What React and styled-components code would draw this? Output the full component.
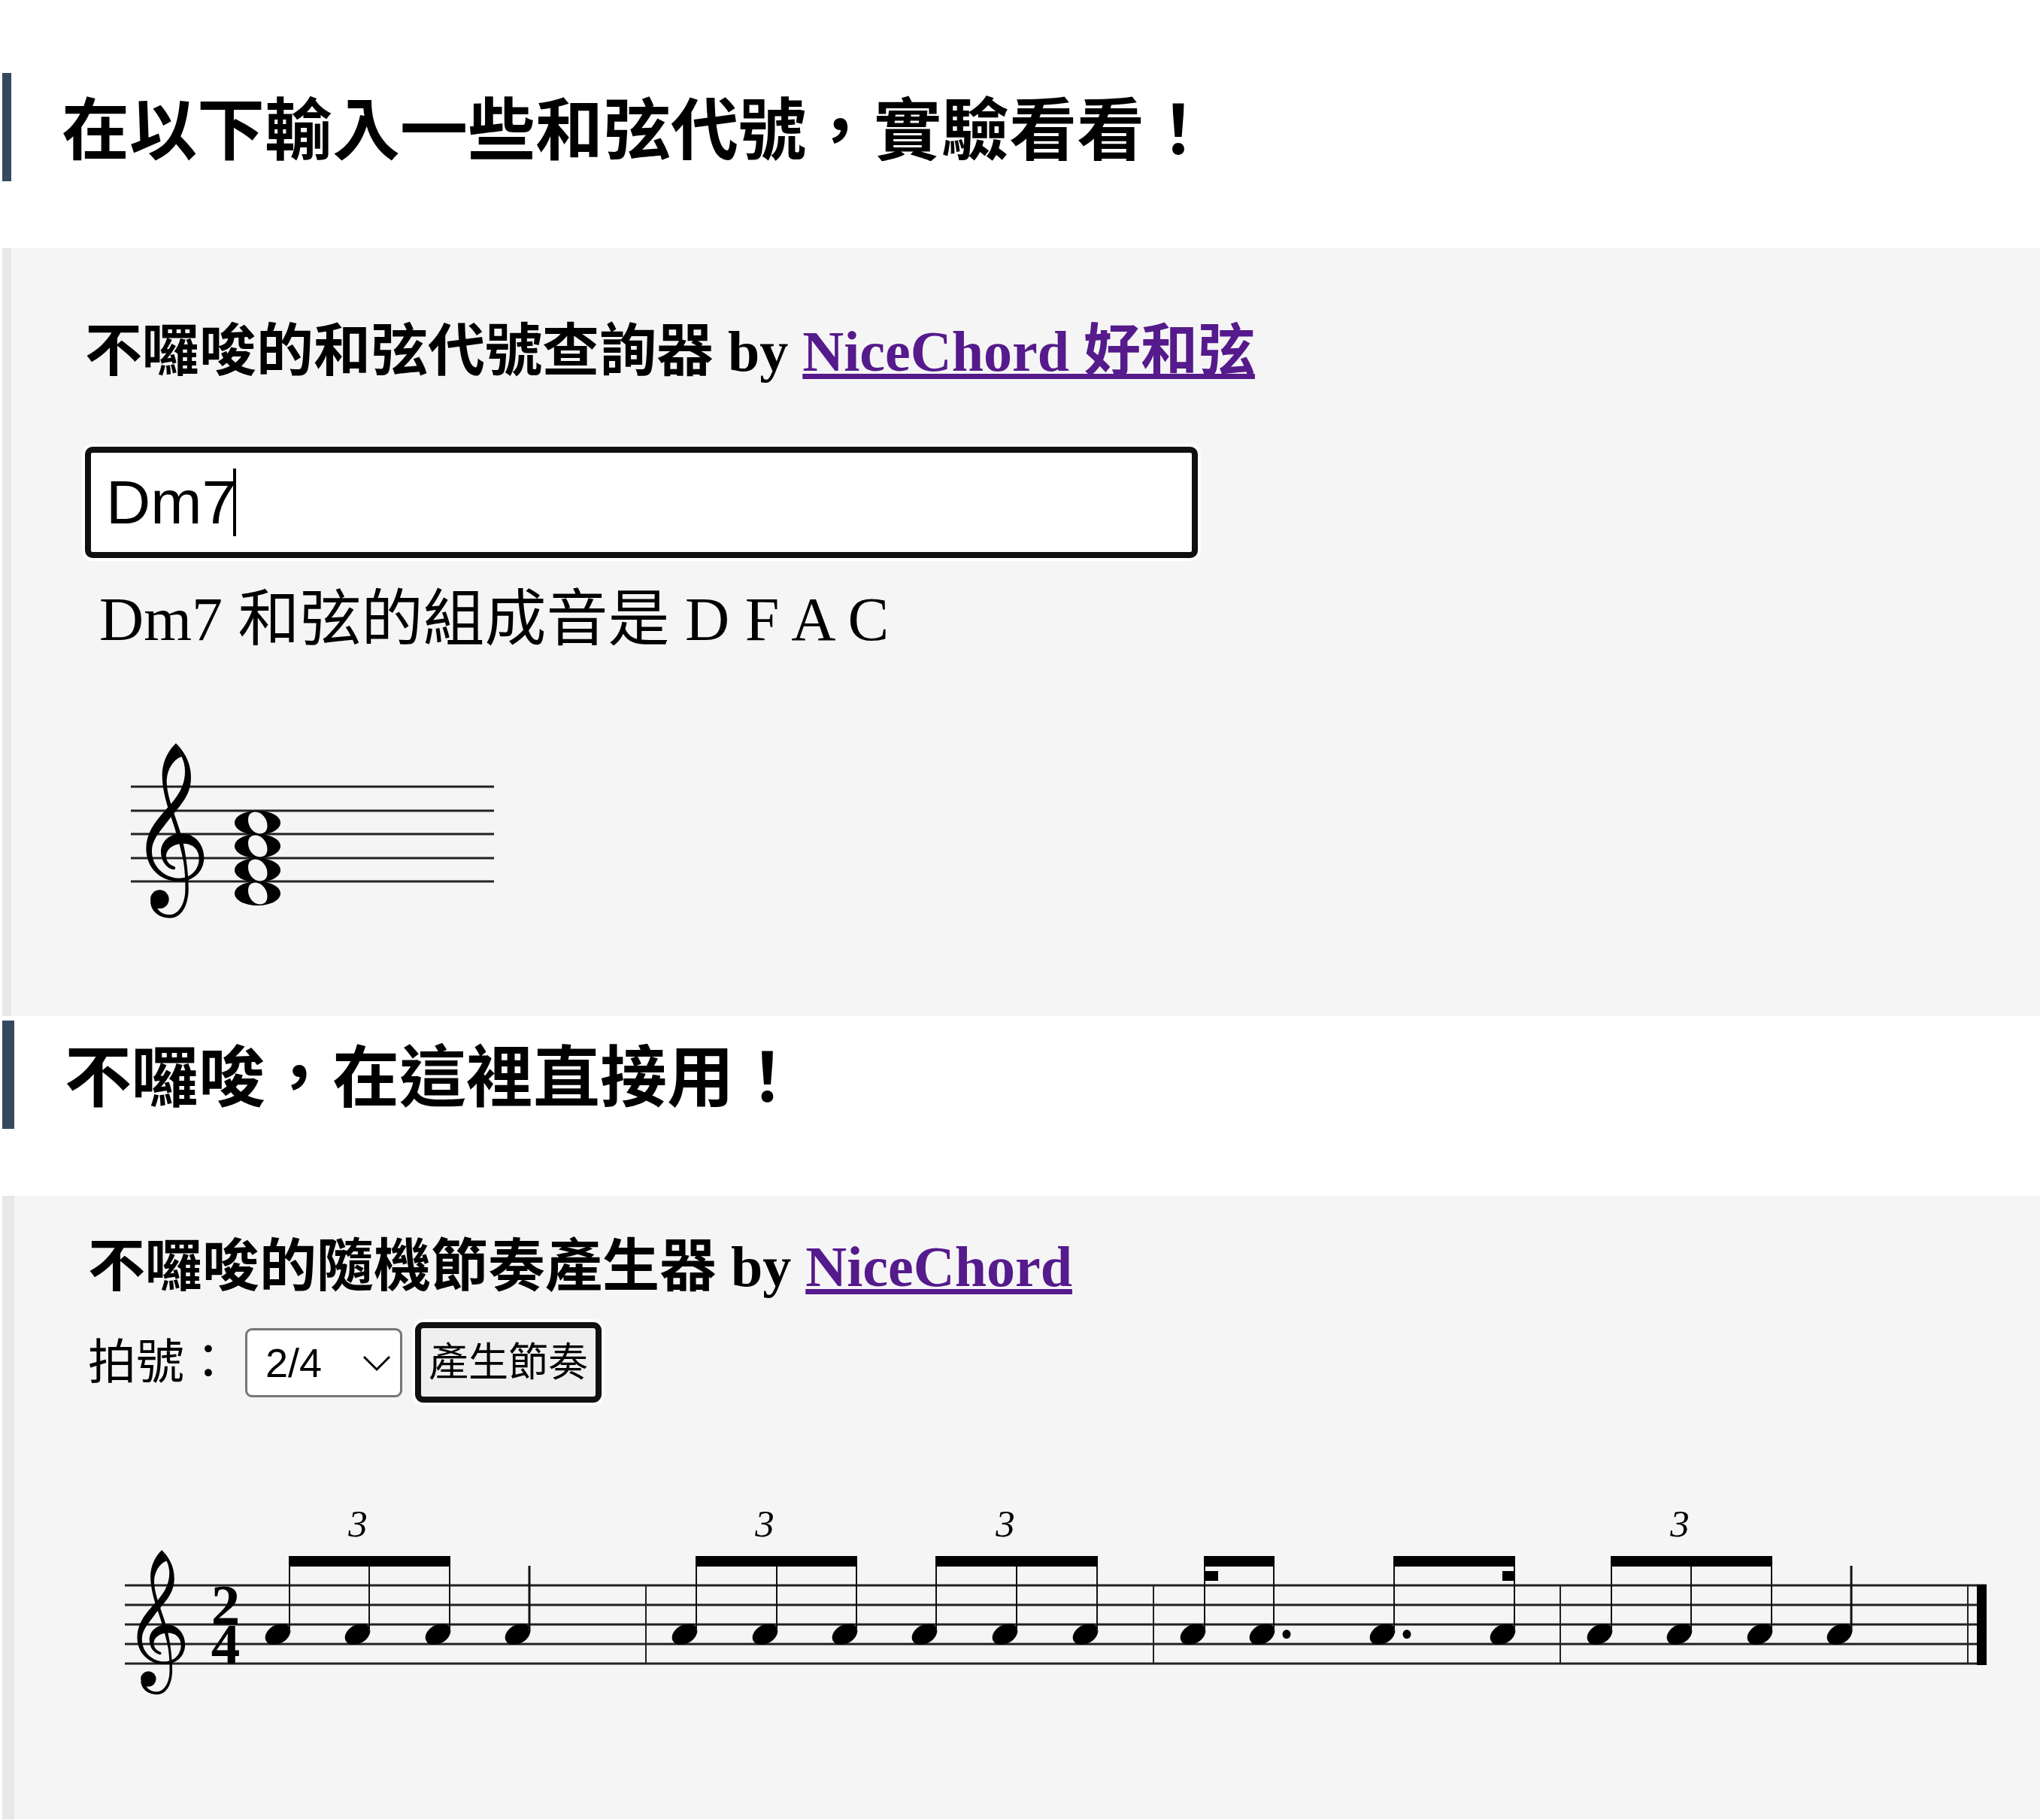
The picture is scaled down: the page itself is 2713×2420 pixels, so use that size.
import React, { useState } from "react";
import styled, { createGlobalStyle } from "styled-components";

const SERIF = `"Liberation Serif", "Noto Sans CJK TC", serif`;
const SANS = `"Liberation Sans", "Noto Sans CJK TC", sans-serif`;

const GlobalStyle = createGlobalStyle`
  *, *::before, *::after { box-sizing: border-box; }
  body {
    margin: 0;
    background: #fff;
    color: #000;
    font-family: ${SERIF};
  }
`;

const Page = styled.main`
  display: flex;
  flex-direction: column;
  gap: 6px;
  padding: 97px 0 0 3px;
`;

const Section = styled.section`
  display: flex;
  flex-direction: column;
  gap: 89px;
`;

const SectionTitle = styled.h2`
  margin: 0;
  padding: 0 0 6px 67px;
  border-left: ${(p) => p.$bar}px solid #34495e;
  font: 700 ${(p) => p.$size}px/138px "Noto Sans CJK TC", sans-serif;
`;

const Panel = styled.div`
  display: flex;
  flex-direction: column;
  align-items: flex-start;
  padding: ${(p) => p.$top}px 0 0 98px;
  border-left: ${(p) => p.$bar}px solid #e8e8e8;
  background: #f5f5f5;
`;

const ToolTitle = styled.h3`
  margin: 0;
  font: 700 76px/100px ${SERIF};
`;

const Link = styled.a`
  color: #551a8b;
  text-decoration: underline;
`;

const InputWrap = styled.div`
  position: relative;
  width: 1480px;
  max-width: 100%;
  margin-top: 77px;
`;

const ChordInput = styled.input`
  display: block;
  width: 100%;
  height: 148px;
  padding: 0 20px;
  border: 8px solid #101010;
  border-radius: 10px;
  outline: none;
  box-shadow: 0 0 0 4px #fff;
  background: #fff;
  color: #000;
  caret-color: transparent;
  font: 400 82px/94px ${SANS};
`;

const Caret = styled.span`
  position: absolute;
  top: 29px;
  left: 197px;
  width: 4px;
  height: 90px;
  background: #000;
`;

const Result = styled.p`
  margin: 32px 0 0 19px;
  font: 400 82px/100px ${SERIF};
`;

const Controls = styled.div`
  display: flex;
  align-items: center;
  gap: 17px;
  margin-top: 24px;
`;

const Label = styled.label`
  font: 400 64px/107px ${SERIF};
`;

const SelectWrap = styled.div`
  position: relative;
`;

const Select = styled.select`
  display: block;
  appearance: none;
  width: 209px;
  height: 92px;
  padding: 0 24px;
  border: 3px solid #767676;
  border-radius: 9px;
  background: #fff;
  color: #000;
  font: 400 54px/60px ${SANS};
`;

const Chevron = styled.svg`
  position: absolute;
  right: 14px;
  top: 36px;
  width: 40px;
  height: 22px;
  pointer-events: none;
`;

const Button = styled.button`
  height: 107px;
  padding: 0 10px;
  border: 8px solid #101010;
  border-radius: 11px;
  box-shadow: 0 0 0 4px #fff;
  background: #efefef;
  color: #000;
  font: 400 53px/80px ${SANS};
`;

const Score = styled.svg`
  display: block;
  width: ${(p) => p.$width}px;
  max-width: 100%;
  height: auto;
`;

function TrebleClef({ x, y, scale }) {
  return (
    <g transform={`translate(${x} ${y}) scale(${scale})`}>
      <path d="M252 58 C285 92 312 135 312 195 C312 240 294 275 270 305 C247 335 230 354 212 378 C180 420 154 450 156 492 C158 550 205 594 262 596 C312 598 344 560 344 518 C344 482 318 458 282 458 C240 458 213 482 213 508 C213 532 228 543 246 550 C252 554 250 562 242 562 C212 556 192 525 192 492 C192 448 228 418 276 418 C328 418 364 462 364 514 C364 570 322 609 262 609 C190 609 133 556 133 478 C133 420 166 374 198 338 C232 298 288 250 288 170 C288 148 282 125 274 111 Z" />
      <path d="M252 58 C220 88 197 135 197 185 C197 235 212 290 222 320 C240 375 268 455 282 530 C288 570 290 610 289 645 C288 700 262 742 226 742 C200 742 182 728 176 712 L150 690 C152 728 185 755 228 755 C275 755 300 705 302 645 C303 590 295 530 286 480 C275 420 255 370 240 325 C225 280 214 240 215 205 C217 165 238 125 274 111 Z" />
      <circle cx="187" cy="680" r="37" />
    </g>
  );
}

function StaffLines({ x1, x2, ys }) {
  return ys.map((y) => (
    <line key={y} x1={x1} x2={x2} y1={y} y2={y} stroke="#222" strokeWidth="3" />
  ));
}

const CHORD_LINES = [1047, 1079, 1110, 1142, 1173];
const CHORD_NOTES = [1095, 1126, 1158, 1189];

function ChordScore() {
  return (
    <Score $width={560} viewBox="113 875 560 477" role="img" aria-label="Dm7">
      <StaffLines x1={174} x2={657} ys={CHORD_LINES} />
      <TrebleClef x={150} y={970} scale={1 / 3} />
      {CHORD_NOTES.map((y) => (
        <g key={y} transform={`translate(342.5 ${y})`}>
          <path d="M-30.5 0 C-30.5 -9 -17 -16 0 -16 C17 -16 30.5 -9 30.5 0 C30.5 9 17 16 0 16 C-17 16 -30.5 9 -30.5 0 Z" />
          <path
            fill="#f5f5f5"
            d="M-12.5 -4 C-12.5 -11 -8.5 -14.5 -3 -14.5 C6 -14.5 13 -5 13 4 C13 11 9 14.5 3 14.5 C-5 14.5 -12.5 6 -12.5 -4 Z"
          />
        </g>
      ))}
    </Score>
  );
}

const RHYTHM_LINES = [2108, 2134, 2160, 2186, 2212];
const BARLINES = [859, 1534, 2075, 2617];
const GROUPS = [
  { stems: [385, 491, 598], tuplet: 476 },
  { stems: [926, 1033, 1139], tuplet: 1017 },
  { stems: [1245, 1352, 1459], tuplet: 1337 },
  { stems: [1602, 1694], dots: [1711], stub: [1602, 18] },
  { stems: [1854, 2014], dots: [1871], stub: [1998, 16] },
  { stems: [2143, 2249, 2356], tuplet: 2234 },
];
const QUARTERS = [704, 2462];

const NoteText = styled.text`
  font-family: ${SERIF};
  font-size: ${(p) => p.$size}px;
  font-style: ${(p) => (p.$italic ? "italic" : "normal")};
  font-weight: ${(p) => (p.$italic ? 400 : 700)};
  text-anchor: middle;
`;

function Note({ stem, top, thick }) {
  return (
    <g>
      <ellipse rx="18" ry="12.5" transform={`translate(${stem - 15.5} 2173) rotate(-30)`} />
      <line x1={stem} x2={stem} y1={top} y2="2169" stroke="#111" strokeWidth={thick ? 3 : 2} />
    </g>
  );
}

function RhythmScore() {
  return (
    <Score $width={2592} viewBox="117 1865 2592 554" role="img" aria-label="2/4">
      <StaffLines x1={166} x2={2642} ys={RHYTHM_LINES} />
      <TrebleClef x={145.8} y={2045} scale={0.2757} />
      <NoteText $size={77}>
        <tspan x="300" y="2160">2</tspan>
        <tspan x="300" y="2212">4</tspan>
      </NoteText>
      {BARLINES.map((x) => (
        <line key={x} x1={x} x2={x} y1="2108" y2="2212" stroke="#222" strokeWidth="2" />
      ))}
      <rect x="2629" y="2107" width="13" height="107" />
      {GROUPS.map(({ stems, tuplet, dots = [], stub }) => {
        const last = stems[stems.length - 1];
        return (
          <g key={stems[0]}>
            {stems.map((s) => <Note key={s} stem={s} top={2070} />)}
            <rect x={stems[0] - 1} y="2069" width={last - stems[0] + 2} height="14" />
            {stub && <rect x={stub[0]} y="2089" width={stub[1]} height="13" />}
            {dots.map((d) => <ellipse key={d} cx={d} cy="2173" rx="5.5" ry="6" />)}
            {tuplet && <NoteText x={tuplet} y="2043" $size={51} $italic>3</NoteText>}
          </g>
        );
      })}
      {QUARTERS.map((s) => <Note key={s} stem={s} top={2082} thick />)}
    </Score>
  );
}

export default function App() {
  const [chord, setChord] = useState("Dm7");
  const [meter, setMeter] = useState("2/4");

  return (
    <>
      <GlobalStyle />
      <Page lang="zh-TW">
        <Section>
          <SectionTitle $bar={12} $size={90}>在以下輸入一些和弦代號，實驗看看！</SectionTitle>
          <Panel $bar={12} $top={87}>
            <ToolTitle>
              不囉唆的和弦代號查詢器 by <Link href="#nicechord">NiceChord 好和弦</Link>
            </ToolTitle>
            <InputWrap>
              <ChordInput
                type="text"
                aria-label="和弦代號"
                value={chord}
                onChange={(e) => setChord(e.target.value)}
              />
              <Caret />
            </InputWrap>
            <Result>Dm7 和弦的組成音是 D F A C</Result>
            <ChordScore />
          </Panel>
        </Section>
        <Section>
          <SectionTitle $bar={16} $size={89}>不囉唆，在這裡直接用！</SectionTitle>
          <Panel $bar={16} $top={44}>
            <ToolTitle>
              不囉唆的隨機節奏產生器 by <Link href="#nicechord">NiceChord</Link>
            </ToolTitle>
            <Controls>
              <Label htmlFor="meter">拍號：</Label>
              <SelectWrap>
                <Select id="meter" value={meter} onChange={(e) => setMeter(e.target.value)}>
                  <option>2/4</option>
                  <option>3/4</option>
                  <option>4/4</option>
                </Select>
                <Chevron viewBox="0 0 40 22" fill="none" stroke="#000" strokeWidth="3">
                  <path d="M3 2 L20 19 L37 2" />
                </Chevron>
              </SelectWrap>
              <Button type="button">產生節奏</Button>
            </Controls>
            <RhythmScore />
          </Panel>
        </Section>
      </Page>
    </>
  );
}
